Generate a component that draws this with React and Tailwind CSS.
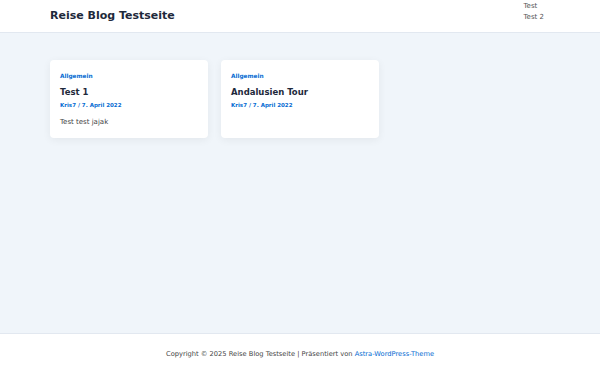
export default function App() {
  return (
    <div
      className="flex h-[375px] w-full flex-col bg-[#f0f5fa] text-[#3f4650]"
      style={{ fontFamily: '"DejaVu Sans", sans-serif' }}
    >
      {/* Header */}
      <header className="flex h-[33px] shrink-0 items-center justify-between border-b border-[#e2e8f0] bg-white pl-[50px] pr-[56px]">
        <h1 className="text-[11px] font-bold text-[#1e293b]">Reise Blog Testseite</h1>
        <nav className="flex flex-col self-start pt-[1px] text-[7px] leading-[11px] text-[#555555]">
          <a>Test</a>
          <a>Test 2</a>
        </nav>
      </header>

      {/* Posts */}
      <main className="flex-1 px-[50px] pt-[27px]">
        <div className="flex gap-[13px]">
          <article className="h-[78px] w-[158px] rounded-[4px] bg-white px-[10px] pt-[12px] shadow-[0_2px_8px_rgba(0,0,0,0.06)]">
            <a className="block text-[5.8px] font-bold leading-[8px] text-[#046bd2]">Allgemein</a>
            <h2 className="mt-[6px] text-[8.5px] font-bold leading-[12px] text-[#1e293b]">Test 1</h2>
            <p className="mt-[3px] text-[5.5px] font-bold leading-[8px] text-[#046bd2]">Kris7 / 7. April 2022</p>
            <p className="mt-[8px] text-[7px] leading-[10px] text-[#444444]">Test test jajak</p>
          </article>
          <article className="h-[78px] w-[158px] rounded-[4px] bg-white px-[10px] pt-[12px] shadow-[0_2px_8px_rgba(0,0,0,0.06)]">
            <a className="block text-[5.8px] font-bold leading-[8px] text-[#046bd2]">Allgemein</a>
            <h2 className="mt-[6px] text-[8.5px] font-bold leading-[12px] text-[#1e293b]">Andalusien Tour</h2>
            <p className="mt-[3px] text-[5.5px] font-bold leading-[8px] text-[#046bd2]">Kris7 / 7. April 2022</p>
          </article>
        </div>
      </main>

      {/* Footer */}
      <footer className="flex h-[42px] shrink-0 items-center justify-center border-t border-[#e2e8f0] bg-white text-[6.7px] text-[#444444]">
        <span>
          Copyright © 2025 Reise Blog Testseite | Präsentiert von{' '}
          <a className="text-[#046bd2]">Astra-WordPress-Theme</a>
        </span>
      </footer>
    </div>
  );
}
